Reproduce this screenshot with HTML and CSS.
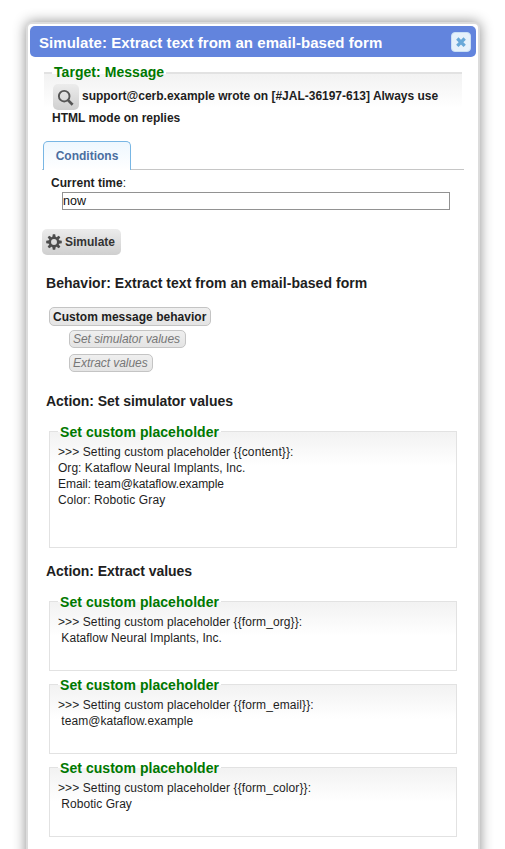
FILE: index.html
```html
<!DOCTYPE html>
<html lang="en">
<head>
<meta charset="utf-8">
<title>Simulate</title>
<link rel="stylesheet" href="styles.css">
</head>
<body>
<main class="dialog">
  <header class="titlebar">
    <h1>Simulate: Extract text from an email-based form</h1>
    <button class="close" aria-label="Close"><svg width="18" height="18" viewBox="0 0 18 18"><path d="M5.300 5.500l7.400 7.400M12.700 5.500l-7.400 7.400" stroke="#68a8d8" stroke-width="3.300"/></svg></button>
  </header>
  <div class="content">
    <fieldset class="target">
      <legend>Target: Message</legend>
      <button class="btn peek" aria-label="Peek"><svg width="26" height="26" viewBox="0 0 26 26" fill="none" stroke="#555"><circle cx="11.200" cy="12.200" r="5.300" stroke-width="1.900"/><path d="M15 16.100l4.600 4.600" stroke-width="2.700"/></svg></button>
      <b>support@cerb.example wrote on [#JAL-36197-613] Always use<br>HTML mode on replies</b>
    </fieldset>
    <nav class="tabs"><a class="tab">Conditions</a></nav>
    <div class="conditions">
      <label for="time"><b>Current time</b>:</label>
      <input id="time" value="now">
    </div>
    <button class="btn simulate"><svg width="16" height="16" viewBox="-8 -8 16 16"><g fill="#4d4d4d"><g id="teeth"><path d="M-1.200-7.800h2.400l.5 3h-3.400zM-1.200 7.800h2.400l.5-3h-3.400zM-7.800-1.200v2.400l3 .5v-3.400zM7.800-1.200v2.400l-3 .5v-3.400z"/></g><use href="#teeth" transform="rotate(45)"/></g><circle r="4.200" fill="none" stroke="#4d4d4d" stroke-width="2.500"/></svg><span>Simulate</span></button>
    <h2 class="behavior">Behavior: Extract text from an email-based form</h2>
    <div class="tree">
      <span class="node root">Custom message behavior</span>
      <span class="node child">Set simulator values</span>
      <span class="node child last">Extract values</span>
    </div>
    <h2 class="set">Action: Set simulator values</h2>
    <fieldset class="log tall">
      <legend>Set custom placeholder</legend>
      <pre>&gt;&gt;&gt; Setting custom placeholder {{content}}:
Org: Kataflow Neural Implants, Inc.
<span class="email">Email: team@kataflow.example</span>
<span class="color">Color: Robotic Gray</span></pre>
    </fieldset>
    <h2 class="extract">Action: Extract values</h2>
    <fieldset class="log">
      <legend>Set custom placeholder</legend>
      <pre>&gt;&gt;&gt; Setting custom placeholder {{form_org}}:
 Kataflow Neural Implants, Inc.</pre>
    </fieldset>
    <fieldset class="log">
      <legend>Set custom placeholder</legend>
      <pre>&gt;&gt;&gt; Setting custom placeholder {{form_email}}:
 team@kataflow.example</pre>
    </fieldset>
    <fieldset class="log">
      <legend>Set custom placeholder</legend>
      <pre>&gt;&gt;&gt; Setting custom placeholder {{form_color}}:
 Robotic Gray</pre>
    </fieldset>
  </div>
</main>
</body>
</html>
```
FILE: styles.css
```css
* { box-sizing: border-box; }
html, body { height: 849px; overflow: hidden; }
body { margin: 0; padding-top: 22px; background: #fff; font: 12px/16px "Liberation Sans", Arial, sans-serif; color: #1e1e1e; }
h1, h2, pre, fieldset { margin: 0; padding: 0; font-family: inherit; }
button { padding: 0; font: inherit; }
svg { display: block; }
.dialog { width: 454px; height: 860px; margin-left: 26px; padding: 2px; border: 2px solid #dcdcdc; border-radius: 6px; background: #fff; box-shadow: 0 0 13px rgba(0, 0, 0, .45); }
.titlebar { height: 31px; display: flex; align-items: center; justify-content: space-between; padding: 0 5px 0 9px; border-radius: 5px; background: #6284dd; color: #fff; }
h1 { font-size: 15px; line-height: 20px; padding-top: 3px; letter-spacing: .05px; white-space: nowrap; }
.close { width: 20px; height: 20px; margin-top: 1px; border-radius: 4px; border: 1px solid #c9dff5; background: #e6f1fb; display: grid; place-items: center; }
.content { padding: 7px 14px 0 12px; }
fieldset { border: 1px solid #e2e2e2; min-width: 0; background: linear-gradient(#f2f2f2, #fff 34px) no-repeat; }
legend { height: 17px; line-height: 17px; padding: 0 2px; font-size: 14px; font-weight: bold; letter-spacing: .05px; color: #007800; white-space: nowrap; }
.target { margin-left: 2px; width: 418px; height: 65px; padding-left: 8px; border-width: 2px 0 0; line-height: 22px; white-space: nowrap; }
.target b { display: block; margin: -25px 0 0 0; text-indent: 30px; letter-spacing: -.01px; }
.btn { border: 0; border-radius: 5px; background: linear-gradient(#ececec, #cfcfcf); color: #333; }
.peek { display: block; width: 26px; height: 26px; margin: 3px 0 0 1px; }
.tabs { width: 422px; height: 41px; border-bottom: 1px solid #c6c6c6; padding: 12px 0 0 1px; display: flex; }
.tab { width: 88px; height: 29px; border: 1px solid #78b6e4; border-bottom: 0; border-radius: 5px 5px 0 0; background: linear-gradient(#eef7fe, #fff); color: #4a6ea0; font-weight: bold; line-height: 28px; text-align: center; }
.conditions { padding: 5px 0 0 9px; height: 59px; }
label { display: block; height: 17px; letter-spacing: .03px; }
#time { display: block; width: 388px; height: 18px; margin-left: 11px; padding: 0; border: 1px solid #929292; font: 12.5px "Liberation Sans", Arial, sans-serif; color: #111; }
.simulate { width: 79px; height: 26px; display: flex; align-items: center; gap: 3px; padding: 0 4px; font-weight: bold; }
h2 { margin-left: 4px; font-size: 14px; line-height: 18px; height: 18px; white-space: nowrap; }
.behavior { margin-top: 19px; letter-spacing: .03px; }
.set, .extract { letter-spacing: -.05px; }
.tree { display: flex; flex-direction: column; align-items: flex-start; margin: 15px 0 20px 7px; }
.node { border: 1px solid #c4c4c4; border-radius: 5px; background: linear-gradient(#efefef, #e4e4e4); white-space: nowrap; }
.root { width: 162px; height: 19px; line-height: 18px; padding: 0 3px; font-weight: bold; letter-spacing: .03px; }
.child { width: 117px; height: 18px; margin: 4px 0 0 20px; padding: 0 3px; line-height: 16px; color: #777; font-style: italic; letter-spacing: -.05px; }
.last { width: 84px; margin-top: 6px; }
.log { width: 408px; height: 78px; margin: 0 0 5px 7px; padding-left: 8px; }
.log legend { line-height: 19px; }
.log pre { margin-top: 4px; white-space: pre; font-size: 12px; letter-spacing: .04px; }
.log pre::first-line { letter-spacing: .1px; }
.email { letter-spacing: -.06px; }
.color { letter-spacing: .1px; }
.tall { height: 125px; margin: 13px 0 14px 7px; }
.extract { margin-bottom: 13px; }
```
